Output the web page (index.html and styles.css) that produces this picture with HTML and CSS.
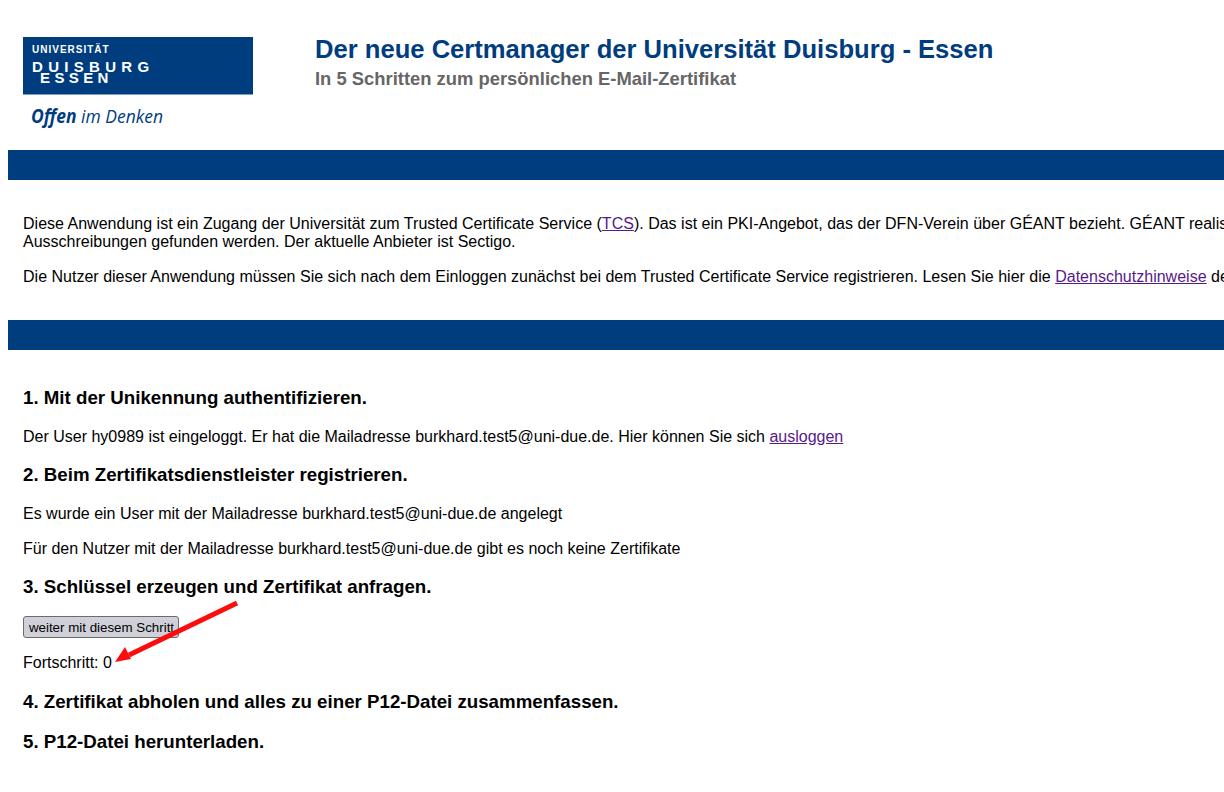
FILE: index.html
```html
<!DOCTYPE html>
<html lang="de">
<head>
    <meta charset="UTF-8">
    <meta name="viewport" content="width=device-width, initial-scale=1.0">
    <title>Certmanager</title>
    <link rel="stylesheet" href="styles.css">
</head>
<body>
    <div class="header">
        <div class="logo">
            <div class="logo-box">
                <div class="logo-uni">UNIVERSITÄT</div>
                <div class="logo-city">DUISBURG</div>
                <div class="logo-city logo-essen">ESSEN</div>
            </div>
            <div class="logo-claim"><b>Offen</b> im Denken</div>
        </div>
        <div class="titles">
            <h1>Der neue Certmanager der Universität Duisburg - Essen</h1>
            <h2>In 5 Schritten zum persönlichen E-Mail-Zertifikat</h2>
        </div>
    </div>

    <div class="bar"></div>

    <div class="section intro">
        <p>Diese Anwendung ist ein Zugang der Universität zum Trusted Certificate Service (<a href="#">TCS</a>). Das ist ein PKI-Angebot, das der DFN-Verein über GÉANT bezieht. GÉANT realisiert dieses Angebot über Anbieter, die in europaweiten<br>Ausschreibungen gefunden werden. Der aktuelle Anbieter ist Sectigo.</p>
        <p>Die Nutzer dieser Anwendung müssen Sie sich nach dem Einloggen zunächst bei dem Trusted Certificate Service registrieren. Lesen Sie hier die <a href="#">Datenschutzhinweise</a> des Anbieters.</p>
    </div>

    <div class="bar"></div>

    <div class="section steps">
        <h3>1. Mit der Unikennung authentifizieren.</h3>
        <p>Der User hy0989 ist eingeloggt. Er hat die Mailadresse burkhard.test5@uni-due.de. Hier können Sie sich <a href="#">ausloggen</a></p>
        <h3>2. Beim Zertifikatsdienstleister registrieren.</h3>
        <p>Es wurde ein User mit der Mailadresse burkhard.test5@uni-due.de angelegt</p>
        <p>Für den Nutzer mit der Mailadresse burkhard.test5@uni-due.de gibt es noch keine Zertifikate</p>
        <h3>3. Schlüssel erzeugen und Zertifikat anfragen.</h3>
        <button class="btn" type="button">weiter mit diesem Schritt</button>
        <p class="progress">Fortschritt: 0</p>
        <h3 class="tight">4. Zertifikat abholen und alles zu einer P12-Datei zusammenfassen.</h3>
        <h3>5. P12-Datei herunterladen.</h3>
    </div>

    <svg class="arrow" width="140" height="80" viewBox="0 0 140 80">
        <path d="M130 5 L22 57" stroke="#fb0d0d" stroke-width="5" fill="none"/>
        <path d="M8 64 L18 49 L24 61 Z" fill="#fb0d0d"/>
    </svg>
</body>
</html>
```

FILE: styles.css
```css
html {
    overflow: hidden;
}

body {
    margin: 0 0 0 8px;
    width: 1800px;
    font-family: "Liberation Sans", Arial, sans-serif;
    font-size: 16px;
    color: #000;
    background: #fff;
}

/* header with logo and title */
.header {
    display: flex;
    height: 150px;
    padding-left: 15px;
    box-sizing: border-box;
}

.logo {
    width: 230px;
    padding-top: 37px;
    margin-right: 62px;
}

.logo-box {
    height: 58px;
    box-sizing: border-box;
    padding: 6px 0 0 9px;
    background: #003d7f;
    border-bottom: 1px solid #7f9dbf;
    color: #fff;
    font-weight: bold;
}

.logo-uni {
    font-size: 10px;
    line-height: 13px;
    letter-spacing: 1px;
}

.logo-city {
    margin-top: 5px;
    font-size: 15px;
    line-height: 11px;
    letter-spacing: 5.3px;
}

.logo-essen {
    margin-top: 0;
    padding-left: 8px;
    letter-spacing: 4.4px;
}

.logo-claim {
    margin: 9px 0 0 8px;
    font-family: "Open Sans", sans-serif;
    font-size: 19px;
    font-style: italic;
    line-height: 24px;
    color: #003d7f;
    transform: scaleX(0.92);
    transform-origin: left;
    white-space: nowrap;
}

.titles {
    padding-top: 34px;
}

h1 {
    margin: 0;
    font-size: 25.6px;
    line-height: 30px;
    color: #003d7f;
}

h2 {
    margin: 5px 0 0;
    font-size: 18.4px;
    line-height: 20px;
    color: #666;
}

.bar {
    height: 30px;
    background: #003d7f;
}

.section {
    padding-left: 15px;
}

.intro {
    height: 140px;
    box-sizing: border-box;
    padding-top: 35px;
    letter-spacing: 0.01px;
}

.steps {
    padding-top: 36px;
}

p {
    margin: 0 0 17px;
    line-height: 18px;
    white-space: nowrap;
}

a {
    color: #551a8b;
}

h3 {
    margin: 0 0 18px;
    font-size: 18.72px;
    line-height: 24px;
}

.btn {
    display: block;
    width: 156px;
    height: 22px;
    margin: -1px 0 16px;
    padding: 0 0 0 1px;
    font-family: "Liberation Sans", Arial, sans-serif;
    font-size: 13.33px;
    color: #000;
    background: #d0d0d8;
    border: 1px solid #6b6b70;
    border-radius: 3px;
}

.progress {
    margin-bottom: 18px;
}

.tight {
    margin-bottom: 16px;
}

/* red annotation arrow lying over the button */
.arrow {
    position: absolute;
    left: 107px;
    top: 598px;
}
```
